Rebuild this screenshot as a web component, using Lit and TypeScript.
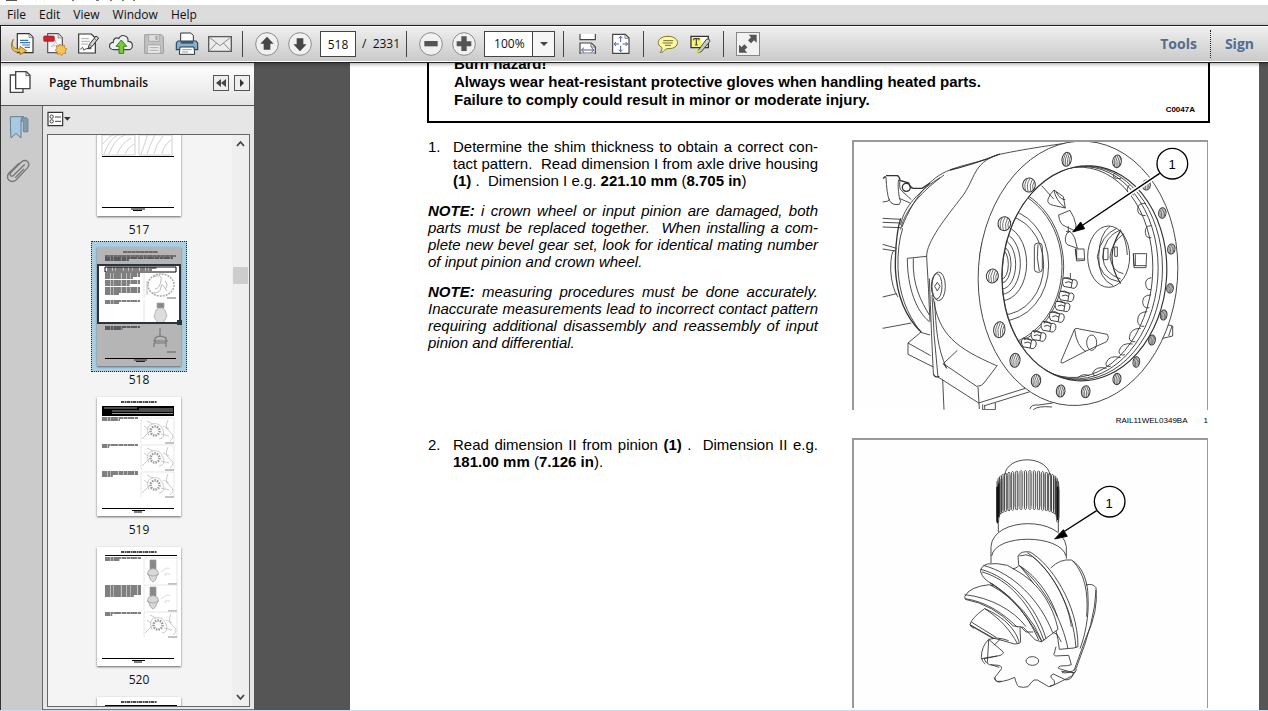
import { LitElement, html, css, svg } from "lit";
import { customElement } from "lit/decorators.js";

/* ---------- toolbar glyphs, drawn on a 72-unit grid shown at 24px ---------- */
const glyph = (body: unknown) => html`<svg class="glyph" viewBox="0 0 72 72" aria-hidden="true">${body}</svg>`;

const disc = svg`<circle cx="36" cy="36" r="34" fill="#f1f1f1" stroke="#8c8c8c" stroke-width="3"/>`;

const icons = {
  open: glyph(svg`
    <path d="M22 5h36l11 11v46H22z" fill="#fff" stroke="#333" stroke-width="3.5"/>
    <path d="M57 5v12h12" fill="#ddd" stroke="#666" stroke-width="2"/>
    <path d="M30 25h25M30 32h30M36 39h24M44 46h16" stroke="#3b74b4" stroke-width="3.5"/>
    <path d="M8 24c-6 14-4 26 12 29h8v-8l20 13-20 12v-8H18C1 60-2 40 8 24z" fill="#f2be4a" stroke="#8f6a1c" stroke-width="2.5" transform="translate(2 -2)"/>`),
  create: glyph(svg`
    <path d="M14 5h32l12 12v45H14z" fill="#f8f8f8" stroke="#555" stroke-width="3.5"/>
    <path d="M45 5v13h13" fill="#ddd" stroke="#777" stroke-width="2"/>
    <path d="M24 44c12-6 14-16 12-20 4 12 8 16 16 16-10 0-20 0-28 4z" fill="none" stroke="#bbb" stroke-width="2.5"/>
    <rect x="2" y="12" width="32" height="16" rx="3" fill="#cf2230" stroke="#991420" stroke-width="2"/>
    <path d="M51 36l5 6 8-3 0 8 8 4-6 5 3 8-8 0-5 7-5-6-8 2 0-8-7-4 6-5-2-8 8 0z" fill="#f5c457" stroke="#b88424" stroke-width="2.5"/>`),
  edit: glyph(svg`
    <path d="M8 6h38l12 12v45H8z" fill="#fff" stroke="#333" stroke-width="3.5"/>
    <path d="M16 20h22M16 28h26M16 36h20" stroke="#aaa" stroke-width="3"/>
    <path d="M14 52c5-8 8-6 8 0s6-2 10-2h14" fill="none" stroke="#333" stroke-width="3"/>
    <path d="M36 50l4-13 20-25 8 6-20 26z" fill="#ccd2d6" stroke="#333" stroke-width="3"/>
    <path d="M40 37l8 7M55 20l8 7" stroke="#444" stroke-width="2"/>`),
  cloud: glyph(svg`
    <path d="M16 53C-4 54-2 31 13 31 12 19 23 15 29 20 36 4 59 10 57 28 75 27 74 53 58 53z" fill="#eef0f2" stroke="#444" stroke-width="3.5"/>
    <path d="M37 24l16 19h-9v21H30V43h-9z" fill="#7dc83c" stroke="#367d16" stroke-width="3"/>`),
  save: glyph(svg`
    <path d="M8 8h50l6 6v50H8z" fill="#c2c2c2" stroke="#9c9c9c" stroke-width="3"/>
    <path d="M20 8h32v20H20z" fill="#dedede" stroke="#a2a2a2" stroke-width="2.5"/>
    <path d="M40 12h7v12h-7z" fill="#aaa"/>
    <path d="M17 39h38v25H17z" fill="#ebebeb" stroke="#a2a2a2" stroke-width="2.5"/>
    <path d="M23 47h26M23 55h26" stroke="#aaa" stroke-width="3"/>`),
  print: glyph(svg`
    <path d="M17 3h30l8 7v26H17z" fill="#fff" stroke="#333" stroke-width="3"/>
    <path d="M9 27h54l5 6v20H4V33z" fill="#87b0cf" stroke="#294760" stroke-width="3.5"/>
    <path d="M17 27h38v8H17z" fill="#365873"/>
    <path d="M15 45h42l2 22H13z" fill="#fff" stroke="#333" stroke-width="3"/>
    <path d="M22 53h28M21 60h18" stroke="#999" stroke-width="3"/>`),
  mail: glyph(svg`
    <path d="M2 14h68v44H2z" fill="#ececec" stroke="#5b5b5b" stroke-width="4"/>
    <path d="M4 16l32 25 32-25M4 56l22-23M68 56L46 33" fill="none" stroke="#777" stroke-width="2.5"/>`),
  up: glyph(svg`${disc}<path d="M36 14l20 21H46v18H26V35H16z" fill="#474747"/>`),
  down: glyph(svg`${disc}<path d="M36 58L16 37h10V19h20v18h10z" fill="#474747"/>`),
  minus: glyph(svg`${disc}<rect x="16" y="27" width="40" height="16" fill="#555"/>`),
  plus: glyph(svg`${disc}<path d="M28 13h16v15h14v15H44v14H28V43H14V28h14z" fill="#555"/>`),
  fitWidth: glyph(svg`
    <path d="M12 6v17h46V6" fill="#fff" stroke="#444" stroke-width="3.5"/>
    <path d="M12 66V33h34l12 11v22" fill="#fff" stroke="#444" stroke-width="3.5"/>
    <path d="M12 63h46M45 33v12h13" fill="none" stroke="#666" stroke-width="3"/>
    <path d="M17 54h36M24 47l-8 7 8 7M46 47l8 7-8 7" fill="none" stroke="#4b5f92" stroke-width="3"/>`),
  fitPage: glyph(svg`
    <path d="M11 7h38l11 11v46H11z" fill="#fff" stroke="#444" stroke-width="3.5"/>
    <path d="M48 7v12h12" fill="none" stroke="#666" stroke-width="2.5"/>
    <path d="M35 13v17M35 41v18M16 36h14M41 36h15M29 19l6-6 6 6M29 53l6 6 6-6M21 30l-6 6 6 6M50 30l6 6-6 6" fill="none" stroke="#4b5f92" stroke-width="3"/>`),
  comment: glyph(svg`
    <path d="M36 13c38 0 38 38 0 37-5 0-9 2-12 6s-7 6-12 5c5-4 7-9 5-15C-2 36 6 13 36 13z" fill="#fbf9a4" stroke="#7c7624" stroke-width="3"/>
    <path d="M22 26h30M20 33h30M27 40h18" stroke="#77722e" stroke-width="3"/>`),
  highlight: glyph(svg`
    <path d="M6 13h52v34H6z" fill="#fdfdf4" stroke="#333" stroke-width="4"/>
    <path d="M9 16h27v28H9z" fill="#fbf36a"/>
    <path d="M14 20h16v5M14 20v5M22 20v19M18 39h8" fill="none" stroke="#444" stroke-width="3.5"/>
    <path d="M28 55l24-33q12-4 10 7L36 60q-16 6-8-5z" fill="#c9cdb8" stroke="#444" stroke-width="3"/>
    <path d="M26 53l10 8-14 2z" fill="#e2dd2e"/>`),
  expand: glyph(svg`
    <rect x="1.500" y="1.500" width="69" height="69" fill="#f2f2f2" stroke="#868686" stroke-width="3"/>
    <path d="M62 8v24l-8-7-9 9-9-9 9-9-7-8zM9 62V38l8 7 8-8 9 9-8 8 8 8z" fill="#555"/>`),
};

/* ---------- figure 1: axle drive housing ---------- */
const boltHoles: Array<[number, number, number, number]> = [
  [537, 150, 19, 21], [463, 266, 19, 21], [427, 423, 18, 21], [448, 584, 17, 24], [495, 676, 15, 21],
  [558, 737, 14, 19], [632, 768, 13, 18], [707, 770, 13, 18], [801, 732, 12, 17], [859, 681, 10, 16],
  [906, 615, 10, 15], [941, 540, 10, 15], [960, 460, 10, 14], [964, 342, 11, 15], [937, 234, 11, 16],
  [889, 150, 12, 15], [801, 79, 13, 19], [650, 73, 14, 21],
];
const bolt = ([x, y, rx, ry]: [number, number, number, number]) => svg`
  <g transform="translate(${x} ${y}) rotate(8)">
    <ellipse rx=${rx} ry=${ry} fill="#fff" stroke-width="3"/>
    <path stroke-width="2" d="M${-rx * 0.4} ${-ry * 0.85}Q${-rx * 0.9} 0 ${-rx * 0.4} ${ry * 0.85}M0 ${-ry * 0.9}Q${-rx * 0.5} 0 0 ${ry * 0.9}M${rx * 0.4} ${-ry * 0.85}Q0 0 ${rx * 0.4} ${ry * 0.85}M${rx * 0.75} ${-ry * 0.6}Q${rx * 0.4} 0 ${rx * 0.75} ${ry * 0.6}"/>
  </g>`;

const chain: Array<[number, number]> = [[658, 443], [648, 483], [636, 513], [619, 545], [594, 574], [564, 602], [535, 624]];
const link = ([x, y]: [number, number]) => svg`
  <g transform="translate(${x} ${y}) rotate(10)">
    <path d="M-18-12Q-26 0-14 14H8V-10zM-18-10Q-8-18 8-10 24-16 24 2 22 18 8 14M-12 2Q-2-6 8 0" fill="#fff"/>
  </g>`;

const lobes = [
  "M905 428q-20 2-18 20t16 16", "M903 480q-26 0-25 22 2 20 20 16", "M892 530q-30 0-29 28 2 18 20 16",
  "M872 580q-32 0-34 28 0 14 18 12", "M848 627q-34-6-41 22 0 14 18 10", "M812 668q-34-10-44 16-2 14 14 10",
  "M770 700q-32-8-42 14 0 10 12 8", "M718 722q-20-8-34 6", "M888 206q-24-4-25 16t24 20", "M904 272q-20 0-18 20t18 16",
  "M838 150q-12 14-2 24l16 6", "M800 112q-14 4-8 16 10 4 22 2",
];

const housing = svg`
  <svg class="drawing" viewBox="854 142 353 268" role="img" aria-label="Axle drive housing">
    <defs>
      <clipPath id="bore"><ellipse cx="703" cy="415" rx="247" ry="323" transform="rotate(4 703 415)"/></clipPath>
    </defs>
    <g transform="translate(850 135) scale(.33333)" fill="none" stroke="#333" stroke-width="2.600" stroke-linejoin="round">
      <path d="M98 201q16 0 22-8M98 250l54 3M98 262l54 2M98 276l54 2M98 328l42 12M98 342l38 6M98 486l42-10M98 580l86-16"/>
      <path d="M108 125q-6 0-8 6M108 122h34q6 2 8 14l26 8q4 14 14 16h26l24-16" stroke-width="4"/>
      <path d="M108 126q2 50 10 70 8 16 30 12 8-8 0-20-6-40-2-54M150 136q-4 26 6 32l28 26M148 190l32 14"/>
      <circle cx="169" cy="157" r="12" stroke-width="4"/>
      <path d="M270 128C190 178 158 230 152 270M282 120C200 180 160 238 152 284"/>
      <path d="M134 346q-12 0-12 60 4 56 22 80"/>
      <path d="M152 250Q136 300 136 400C140 480 164 544 214 592" stroke-width="4"/>
      <path d="M158 280Q142 330 144 400C148 480 170 534 210 588"/>
      <path d="M710 18C650 22 500 46 440 60 400 80 340 88 300 105 240 126 190 190 156 276" />
      <path d="M450 57Q360 92 300 105" stroke-width="4"/>
      <path d="M440 60C370 86 375 130 340 180 290 245 228 320 230 366M664 26C590 50 550 76 500 150 440 232 400 270 388 370"/>
      <path d="M172 370l58-6M172 370C172 460 200 530 238 560M190 370C186 450 214 500 238 540M230 366Q236 460 240 560"/>
      <path d="M238 430Q244 590 250 716M246 480Q250 600 264 726M254 500C258 580 262 640 290 700"/>
      <path d="M250 490C266 600 320 640 440 692"/>
      <path d="M250 716q4 14 18 8" stroke-width="4"/>
      <path d="M212 592l-38 32v34l76 38M174 624l68 38M212 592l28 8M264 726l122 78M290 700l-10-14 42-40M280 686l100 68q16 0 22-10l38-50 2-4M278 734l4 90M384 756l4 66"/>
      <ellipse cx="266" cy="454" rx="20" ry="43"/><ellipse cx="260" cy="454" rx="16" ry="38"/>
      <path d="M262 442l8 12-8 14-8-14z"/>
      <path d="M386 804l140-44M404 812l136-42M398 808v16h38v-20M404 810v12M540 822q2-14 26-12l42-6M550 824q14-12 56-8"/>
      <path d="M936 565l32 8v30l-34 8M966 573l-10 30"/>

      <ellipse cx="684" cy="415" rx="299" ry="397" transform="rotate(4 684 415)" fill="#fff"/>
      <ellipse cx="703" cy="415" rx="247" ry="323" transform="rotate(4 703 415)" stroke-width="3.500"/>
      <g clip-path="url(#bore)">
        <ellipse cx="697" cy="414" rx="240" ry="321" transform="rotate(4 697 414)"/>
        <ellipse cx="688" cy="413" rx="236" ry="319" transform="rotate(4 688 413)"/>
        <ellipse cx="678" cy="412" rx="230" ry="316" transform="rotate(4 678 412)"/>
        <ellipse cx="455" cy="388" rx="20" ry="44"/>
        <ellipse cx="455" cy="388" rx="28" ry="56"/>
        <ellipse cx="455" cy="388" rx="42" ry="74"/>
        <ellipse cx="455" cy="386" rx="56" ry="92"/>
        <ellipse cx="455" cy="385" rx="75" ry="112"/>
        <ellipse cx="455" cy="390" rx="126" ry="150"/>
        <ellipse cx="455" cy="390" rx="141" ry="168"/>
        <ellipse cx="432" cy="395" rx="204" ry="238"/>
        <ellipse cx="432" cy="395" rx="209" ry="244"/>
      </g>
      <rect x="553" y="324" width="24" height="88" rx="11"/>
      <path d="M564 328q-6 40 4 80"/>
      <path d="M575 152l36 40M612 165l28 20 6 34-36-8q-20-4-16-18t18-28M612 165q4 30 34 54M618 170q14 26 28 24"/>
      <path d="M626 240l34-14q14 22 18 44l-2 18-30-14q-18-6-20-34M655 274v20M648 290q12-8 26 18l8 32q-22-8-28-10-12-8-6-28 2-12 14-14"/>
      <path d="M676 342h26l2 34-24 2zM676 342l4 30 24 0M680 344v28"/>
      <ellipse cx="776" cy="365" rx="63" ry="92"/>
      <path d="M800 280q-46 20-58 84 6 66 64 76M780 274q-32 22-34 90t44 88M812 284q-50 20-54 82 4 50 54 66M822 296q-38 26-42 70 6 44 40 50"/>
      <path d="M812 286q-52 82 0 160" stroke-width="3.500"/>
      <path d="M760 340h14v34h-14zM794 336h8v28h-8zM812 286q18 30 20 74"/>
      <path d="M850 356h40l-2 42h-36zM850 356l2 36h37M856 358v34"/>
      <path d="M661 414v16"/>
      ${chain.map(link)}
      <path d="M674 582q8-4 14 0l84 16q8 8-2 22L704 650l-66 34q-8 2-4-8zM674 584q6 50 34 66"/>
      <ellipse cx="725" cy="623" rx="15" ry="23"/>
      ${lobes.map((d) => svg`<path d=${d}/>`)}
      ${boltHoles.map(bolt)}
      <path d="M929 115L700 270" stroke="#fff" stroke-width="14"/>
      <path d="M929 115L690 276" stroke="#000" stroke-width="4"/>
      <path d="M668 291l24-30 12 20z" fill="#000" stroke="#000"/>
      <circle cx="967" cy="86" r="46" fill="#fff" stroke="#000" stroke-width="4"/>
    </g>
    <text class="callout" x="1172" y="169" text-anchor="middle">1</text>
  </svg>`;

/* ---------- figure 2: pinion ---------- */
const splines = Array.from({ length: 22 }, (_, i) => {
  const t = (i - 10.5) / 10.5;
  const x = 263 + 90 * Math.sin((t * Math.PI) / 2);
  const lift = Math.sqrt(Math.max(0, 1 - t * t * 0.98));
  return { x, top: 116 - 56 * lift, bottom: 220 - 44 * lift };
});

const pinion = svg`
  <svg class="drawing" viewBox="854 440 353 268" role="img" aria-label="Pinion">
    <g transform="translate(940 450) scale(.33333)" fill="none" stroke="#333" stroke-width="2.600" stroke-linejoin="round">
      <path d="M194 76C200 14 322 14 330 76" fill="#fff"/>
      ${splines.map(
        (s) => svg`<path d="M${s.x - 3} ${s.bottom}V${s.top + 4}q3-6 6 0V${s.bottom}q-3 6-6 0" stroke-width="2.600"/>
          <path d="M${s.x + 5} ${s.top + 10}V${s.bottom - 8}" stroke="#555" stroke-width="1.500"/>`,
      )}
      <path d="M172 110v110M176 100v100M353 110v100" stroke="#111" stroke-width="4"/>
      <path d="M175 212v34M355 206v40"/>
      <path d="M153 340V290C158 200 366 196 379 290v36M155 318C166 250 362 252 378 318"/>
      <path d="M332 354Q360 326 394 330C430 350 444 400 444 440 448 500 434 560 420 596" fill="#fff"/>
      <path d="M398 332C432 370 446 420 440 500"/>
      <path d="M438 405q20-6 30 8 8 70-30 150L402 662M468 420q-2 90-60 236-20 16-42 12"/>
      <path d="M236 344l-2-26q8-16 36-12C330 340 414 460 414 590l-12 4-44 4q-12-130-122-254z" fill="#fff"/>
      <path d="M262 308C330 350 400 470 408 594M240 348C320 420 366 510 384 596M238 318q20-8 40 2C350 380 386 470 394 530"/>
      <path d="M122 366q-2-16 20-24 30-4 60 4l24 14C300 400 340 470 354 538L306 574Q270 480 158 402 130 390 122 366z" fill="#fff"/>
      <path d="M130 346C220 370 300 450 338 548M122 358C210 380 290 470 318 566M126 366C180 380 260 430 312 572M236 346C280 370 330 430 352 500M218 356q10 0 18-8"/>
      <path d="M156 402C200 430 270 500 296 572M150 406l10 0"/>
      <path d="M74 440q14-30 74-36l8 4C220 440 270 510 306 576l-20-6-36-38-30-4Q160 464 76 448z" fill="#fff"/>
      <path d="M74 434C150 442 220 480 258 530M76 446C140 456 190 490 232 532M150 400C210 430 260 490 296 570"/>
      <path d="M90 524q4-20 44-48C190 500 230 540 238 580l-14 2-64-18z" fill="#fff"/>
      <path d="M134 476C180 506 210 540 232 580M90 526l70 40M94 516l74 46M90 524q8 14 14 8"/>
      <path d="M240 532l2 46M242 530l16 16h22M340 548l10 4q12 20 14 24"/>
      <path d="M190 606l-44-38q-22 22-22 54 2 14 12 20M146 570l-4 68M124 626l48-8M146 568q12-2 24-4 20 2 36 8M182 566l-20 20"/>
      <path d="M190 606q0 10-18 12l-40 8q4 12 16 18l28 2q14 4 6 14l-16 20q-4 10 4 14 18 2 34-4l20-8q6 24 12 28 14 4 28 0 10-14 18-20h10l34 20q10 0 18-8 2-12-10-18-6-8 6-12l38 18q20-2 22-22l-36-10q-18-4-2-10 24 0 32-4l-8-28-40 2q-8-4-2-12l4-16"/>
      <path d="M152 644l26 8M162 682q8 20 24 12M330 708l14-4 40-20M364 664l40 4 6-10M384 684q16-4 22-20"/>
      <ellipse cx="277" cy="633" rx="19" ry="13"/>
      <path d="M470 182L370 246" stroke="#000" stroke-width="4"/>
      <path d="M344 267l26-28 12 20z" fill="#000" stroke="#000"/>
      <circle cx="509" cy="155" r="46" fill="#fff" stroke="#000" stroke-width="4"/>
    </g>
    <text class="callout" x="1109" y="508" text-anchor="middle">1</text>
  </svg>`;

/* ---------- page thumbnails, 84 x 119 ---------- */
const rows = (x: number, y: number, w: number, n: number, last = 0.4) =>
  Array.from({ length: n }, (_, i) => {
    const end = i === n - 1 ? x + w * last : x + w;
    return svg`<path d="M${x} ${y + i * 2}H${end}" stroke="#000" stroke-width="1.200" stroke-dasharray="5 .5 3 .4 7 .6"/>`;
  });
const heading = svg`<path d="M24 5H60" stroke="#111" stroke-width="1.400" stroke-dasharray="3 .6 2 .4"/>`;
const footer = svg`<path d="M5 111.500H77" stroke="#000"/><path d="M35 113.500H48M37 115H45" stroke="#000" stroke-width="1.200"/>`;
const gearPic = (x: number, y: number) => svg`
  <g transform="translate(${x} ${y})" fill="none" stroke="#b5b5b5" stroke-width=".7">
    <path d="M0 25V0h33v25" stroke="#ddd"/>
    <circle cx="14" cy="13" r="4.500" stroke="#999" stroke-width="2.500" stroke-dasharray="1.500 1"/>
    <path d="M8 18q-4-10 3-12 8-2 11 6t-4 9M1 21l8-8M27 2q-4 8 2 12t0 9M22 8l6 3M20 16l8 2M6 3l6 3M3 8l4 3" /><path d="M24 25h9" stroke="#555"/>
  </g>`;
const pinionPic = (x: number, y: number) => svg`
  <g transform="translate(${x} ${y})" fill="none" stroke="#999" stroke-width=".7">
    <path d="M0 25V0h33v25" stroke="#ddd"/>
    <path d="M6 2h6v9H6z" fill="#888"/><path d="M5 12q-3 3 0 6 1 5 4 6 3-1 4-6 3-3 0-6-4-3-8 0zM3 16q6 4 12 0" fill="#d8d8d8"/>
    <path d="M17 14q6-6 9-3M22 18q-4-3 4-2" stroke="#ccc"/>
    <path d="M24 26h9" stroke="#555"/>
  </g>`;
const thumbs: Record<string, unknown> = {
  "517": svg`
    <g fill="none" stroke="#c4c4c4" stroke-width=".8">
      <path d="M5 1h33v20H5zM42 1h33v20H42zM7 20q6-16 14-19M12 20q6-16 16-19M20 20q4-10 14-16M28 20q2-6 9-10M6 10q6-8 10-9M44 20q6-16 6-19M50 20q6-16 8-19M57 20q2-10 9-18M65 20q1-8 9-14"/>
    </g>
    <path d="M5 22.500H77M5 73.500H77" stroke="#000"/><path d="M34 75H48M36 76.500H45" stroke="#000"/>`,
  "518": svg`
    <rect width="84" height="119" fill="#b5b5b5"/>
    <path d="M26 5H61M8 9H79" stroke="#222" stroke-dasharray="4 .3"/>
    ${rows(8, 11, 68, 2, 0.35)}
    <rect x="1" y="18" width="82" height="59" fill="#fff"/>
    <path d="M8 20H79V25H8z" fill="none" stroke="#000"/>
    ${rows(10, 21, 50, 2, 0.9)}
    ${rows(8, 27, 35, 3, 0.8)}${rows(8, 34, 35, 3, 0.7)}${rows(8, 41, 35, 4, 0.4)}${rows(8, 54, 35, 2, 0.4)}
    <g fill="none" stroke="#aaa" stroke-width=".8">
      <ellipse cx="64" cy="38" rx="13" ry="11" stroke-width="1.500" stroke-dasharray="2 1"/>
      <path d="M56 30q10-4 8 4t-6 8M56 46q8 0 8-6t6 4M50 34v14M68 34q4 4 0 8"/>
      <path d="M47 26v25M47 53v24" stroke="#ddd"/>
      <path d="M60 56h7v5h-7z" fill="#888"/><path d="M59 63q6-4 9 0l2 6-4 7h-5l-4-6z" fill="#ddd"/><path d="M70 51h9M70 105h9" stroke="#444"/>
      <path d="M63 81v9M58 91q5-4 11 0v5H58zM56 94h15M57 96v4M69 96v4" stroke="#777" stroke-width="1.200"/>
    </g>
    ${rows(8, 80, 35, 2, 0.5)}
    <path d="M8 111.500H79" stroke="#000"/><path d="M37 113H50M39 114.500H48" stroke="#222"/>
    <rect x="1" y="18" width="82" height="58" fill="none" stroke="#2b333b" stroke-width="2"/>
    <rect x="80" y="73" width="5" height="5" fill="#2b333b"/>`,
  "519": svg`${heading}<path d="M5 9H77V19H5z"/><path d="M7 11H40M42 12H76M15 14H76M15 16.500H76" stroke="#fff" stroke-width=".6"/>
    ${rows(5, 21, 36, 2, 0.5)}${rows(5, 48, 36, 2, 0.2)}${rows(5, 75, 36, 3, 0.3)}
    ${gearPic(44, 21)}${gearPic(44, 48)}${gearPic(44, 75)}${footer}`,
  "520": svg`${heading}<path d="M8 8.500H80" stroke="#000"/>
    ${rows(8, 11, 36, 2, 0.4)}${rows(8, 39, 36, 6, 0.8)}${rows(8, 66, 36, 2, 0.2)}
    ${pinionPic(47, 11)}${pinionPic(47, 38)}${gearPic(47, 65)}${footer}`,
};
const nextPage = svg`${heading}<path d="M8 8.500H80" stroke="#000"/>${rows(8, 11, 36, 3)}${footer}`;

@customElement("app-root")
export class AppRoot extends LitElement {
  static properties = { selected: { state: true } };
  declare selected: string;

  constructor() {
    super();
    this.selected = "518";
  }

  static styles = css`
    :host {
      display: flex;
      flex-direction: column;
      height: 100vh;
      overflow: hidden;
      background: #555;
      color: #111;
      font: 12px/16px "Open Sans", "Noto Sans", sans-serif;
    }
    * { box-sizing: border-box; }
    button {
      margin: 0;
      padding: 0;
      border: 0;
      background: none;
      color: inherit;
      font: inherit;
    }
    .titlebar { flex: none; height: 5px; background: #fff; }
    .titlebar svg { display: block; }
    .menubar { flex: none; display: flex; gap: 13px; height: 20px; padding: 0 7px; background: #dcdcdc; }
    .toolbar {
      flex: none;
      z-index: 1;
      display: flex;
      align-items: center;
      height: 38px;
      padding: 0 14px 0 4px;
      border: solid #222;
      border-width: 1px 0 1px 1px;
      background: linear-gradient(#f0f0f0, #c9c9c9);
      box-shadow: inset 0 1px #fff, inset 0 -1px #fff, 0 1px 4px rgb(0 0 0 / 40%);
    }
    .tool { display: grid; place-items: center; width: 33px; height: 33px; flex: none; }
    .glyph { display: block; width: 24px; height: 24px; }
    .rule { flex: none; width: 1px; height: 26px; margin: 0 7px 0 6px; background: #444; }
    .pageno {
      width: 36px;
      height: 26px;
      margin: 0 6px 0 4px;
      padding: 0;
      border: 1px solid #444;
      background: #fff;
      color: #111;
      font: inherit;
      text-align: center;
    }
    .total { white-space: pre; }
    .zoom { display: grid; grid-template-columns: 47px 22px; height: 26px; margin: 0 2px 0 4px; border: 1px solid #444; background: #fff; }
    .zoom select {
      grid-area: 1 / 1 / 2 / 3;
      appearance: none;
      border: 0;
      padding: 0 0 0 9px;
      background: none;
      color: #111;
      font: inherit;
    }
    .zoom span { grid-area: 1 / 2; display: grid; place-items: center; border-left: 1px solid #444; background: #f6f6f6; pointer-events: none; }
    .zoom svg { width: 8px; height: 4px; }
    .spacer { flex: 1; }
    .link { color: #536d8f; font-size: 14px; font-weight: 700; text-decoration: none; }
    .dotted { height: 28px; margin: 0 14px 0 13px; border-left: 1px dotted #222; }

    .workspace { flex: 1; display: flex; min-height: 0; border-bottom: 1px solid #c9dbe6; }
    .side {
      flex: none;
      display: grid;
      grid-template: 43px minmax(0, 1fr) / 42px 212px;
      border-left: 1px solid #333;
      width: 254px;
      background: #e6e6e6;
    }
    .side-head {
      grid-column: 1 / 3;
      display: flex;
      align-items: center;
      padding: 0 5px 2px 7px;
      border-bottom: 1px solid #555;
      background: linear-gradient(#fff, #e4e4e4);
    }
    .side-head h2 { flex: 1; margin: 0 0 0 17px; font-size: 12px; line-height: 16px; font-weight: 600; }
    .pages { width: 24px; height: 26px; }
    .mini { width: 16px; height: 16px; margin-left: 5px; border: 1px solid #555; background: #eee; display: grid; place-items: center; }
    .mini svg { width: 10px; height: 8px; }
    .rail { display: flex; flex-direction: column; align-items: center; gap: 18px; padding: 8px 8px 0 0; border-right: 1px solid #666; background: #cbcbcb; }
    .rail svg { display: block; width: 26px; height: 26px; }
    .thumbs-pane { display: flex; flex-direction: column; min-height: 0; padding: 5px 4px 2px 4px; border-right: 1px solid #888; border-bottom: 1px solid #777; }
    .options { display: block; width: 26px; height: 16px; margin-bottom: 7px; }
    .options svg { display: block; width: 26px; height: 16px; }
    .frame { flex: 1; display: flex; min-height: 0; border: 1px solid #666; background: #f4f4f4; }
    .scroller { flex: 1; overflow: hidden; }
    .list { margin: -44px 0 0; padding: 0 2px 0 0; list-style: none; }
    .list li { display: flex; justify-content: center; }
    .thumb { display: grid; justify-items: center; height: 150px; grid-template-rows: 131px 19px; line-height: 16px; }
    .thumb .card { padding: 5px; border: 1px dotted transparent; }
    .thumb.on .card { border-color: #223; background: #abcfe2; }
    .card svg { display: block; width: 84px; height: 119px; background: #fff; box-shadow: 0 1px 2px #666; overflow: visible; }
    .bar { display: flex; flex-direction: column; width: 17px; background: #efefef; align-items: center; }
    .bar button { width: 16px; height: 18px; display: grid; place-items: center; }
    .bar svg { width: 9px; height: 8px; }
    .before { flex: 114; }
    .grip { flex: none; width: 15px; height: 17px; background: #cdcdcd; }
    .after { flex: 405; }

    .doc { flex: 1; min-width: 0; display: flex; padding-right: 9px; background: #555; }
    .splitter { flex: none; width: 96px; display: flex; align-items: center; padding: 0 0 0 2px; }
    .splitter span { width: 5px; height: 48px; background: radial-gradient(circle, #bbb 35%, transparent 45%) 0 0 / 2px 2px; }
    .paper {
      flex: 1;
      min-width: 0;
      overflow: hidden;
      padding: 0 51px 0 78px;
      background: #fff;
      color: #000;
      font: 15px/17px "Liberation Sans", Arial, sans-serif;
    }
    .warning { display: flex; justify-content: space-between; margin: -20px -2px 0 -1px; padding: 10px 13px 7px 25px; border: 2px solid #000; font-weight: 700; line-height: 18px; }
    .warning p { margin: 0 0 5px; }
    .warning small { align-self: flex-end; font-size: 8px; line-height: 8px; }
    .step { display: grid; grid-template-columns: 390fr 356fr; gap: 34px; padding-top: 15px; }
    .step + .step { padding-top: 8px; }
    .step p { margin: 0 0 13px; }
    .item { display: grid; grid-template-columns: 25px 1fr; }
    .just { display: block; text-align-last: justify; }
    .line { display: block; }
    .note { font-style: italic; }
    figure { margin: 2px 0 0; }
    .drawing { display: block; width: 100%; border: solid #999; border-width: 2px 1px 0 2px; background: #fefefe; }
    .callout { font: 13px "Liberation Sans", Arial, sans-serif; fill: #000; }
    figcaption { display: flex; justify-content: flex-end; gap: 16px; padding-top: 3px; font-size: 8px; line-height: 15px; }
  `;

  private tool(name: keyof typeof icons, label: string) {
    return html`<button class="tool" aria-label=${label} title=${label}>${icons[name]}</button>`;
  }

  private sidebar() {
    return html`<aside class="side">
      <header class="side-head">
        <svg class="pages" viewBox="0 0 72 78" aria-hidden="true">
          <path d="M7 15h38v52H7z" fill="#fff" stroke="#444" stroke-width="4"/>
          <path d="M23 5h32l11 11v40H23z" fill="#fff" stroke="#444" stroke-width="4"/>
          <path d="M54 5v12h12" fill="none" stroke="#555" stroke-width="3"/>
        </svg>
        <h2>Page Thumbnails</h2>
        <button class="mini" aria-label="Collapse"><svg viewBox="0 0 10 8"><path d="M5 0v8L0 4zM10 0v8L5 4z" fill="#444"/></svg></button>
        <button class="mini" aria-label="Expand"><svg viewBox="0 0 10 8"><path d="M3 0v8l4-4z" fill="#333"/></svg></button>
      </header>
      <nav class="rail">
        <button aria-label="Bookmarks"><svg viewBox="0 0 78 78">
          <path d="M36 11h28q7 2 5 12v30q-10 2-14 0V22H40z" fill="#7f9db2" stroke="#5d7789" stroke-width="2"/>
          <path d="M16 8h40q-8 2-8 12v52L33 58 18 72q-2-30-2-64z" fill="#a9c9df" stroke="#5f7f96" stroke-width="3"/>
        </svg></button>
        <button aria-label="Attachments"><svg viewBox="0 0 78 78">
          <path d="M58 20L26 52q-6 4-9 1-4-4 1-10L50 11q10-7 18 0 7 8 0 18L34 65q-12 10-22 2-9-10 0-22L42 16M56 34L32 58" fill="none" stroke="#777" stroke-width="4" stroke-linecap="round"/>
        </svg></button>
      </nav>
      <section class="thumbs-pane">
        <button class="options" aria-label="Options"><svg viewBox="0 0 78 48">
          <path d="M3 4h44v40H3z" fill="#fff" stroke="#333" stroke-width="3.500"/><circle cx="14" cy="17" r="5" fill="none" stroke="#444" stroke-width="3"/>
          <circle cx="14" cy="31" r="5" fill="none" stroke="#444" stroke-width="3"/><path d="M24 18h18M24 31h18" stroke="#444" stroke-width="3"/>
          <path d="M51 18h20L61 29z" fill="#333"/>
        </svg></button>
        <div class="frame">
          <div class="scroller">
            <ul class="list">
              ${Object.keys(thumbs).map(
                (n) => html`<li>
                  <button class="thumb ${this.selected === n ? "on" : ""}" @click=${() => (this.selected = n)}>
                    <span class="card"><svg viewBox="0 ${n === "517" ? -37 : 0} 84 119" aria-hidden="true">${thumbs[n]}</svg></span>
                    <span>${n}</span>
                  </button>
                </li>`,
              )}
              <li><button class="thumb" aria-label="Next page"><span class="card"><svg viewBox="0 0 84 119" aria-hidden="true">${nextPage}</svg></span></button></li>
            </ul>
          </div>
          <div class="bar">
            <button aria-label="Scroll up"><svg viewBox="0 0 9 8"><path d="M1 6l3.500-4L8 6" fill="none" stroke="#444" stroke-width="1.800"/></svg></button>
            <span class="before"></span><span class="grip"></span><span class="after"></span>
            <button aria-label="Scroll down"><svg viewBox="0 0 9 8"><path d="M1 2l3.500 4L8 2" fill="none" stroke="#444" stroke-width="1.800"/></svg></button>
          </div>
        </div>
      </section>
    </aside>`;
  }

  render() {
    return html`
      <div class="titlebar">
        <svg width="160" height="5" aria-hidden="true"><path d="M6 0.500h11" stroke="#555"/><path d="M72 .5h2M96 .5h3M110 .5h2M122 .5h2M133 .5h2" stroke="#777"/></svg>
      </div>
      <nav class="menubar">
        ${["File", "Edit", "View", "Window", "Help"].map((m) => html`<button>${m}</button>`)}
      </nav>
      <div class="toolbar">
        ${this.tool("open", "Open")}${this.tool("create", "Create PDF")}${this.tool("edit", "Edit")}
        ${this.tool("cloud", "Upload")}${this.tool("save", "Save")}${this.tool("print", "Print")}${this.tool("mail", "Email")}
        <span class="rule"></span>
        ${this.tool("up", "Previous page")}${this.tool("down", "Next page")}
        <input class="pageno" aria-label="Page number" .value=${"518"} />
        <span class="total">/  2331</span>
        <span class="rule"></span>
        ${this.tool("minus", "Zoom out")}${this.tool("plus", "Zoom in")}
        <div class="zoom">
          <select aria-label="Zoom level"><option>100%</option><option>125%</option></select>
          <span><svg viewBox="0 0 8 4"><path d="M0 0h8L4 4z" fill="#444"/></svg></span>
        </div>
        <span class="rule"></span>
        ${this.tool("fitWidth", "Fit width")}${this.tool("fitPage", "Fit page")}
        <span class="rule"></span>
        ${this.tool("comment", "Comment")}${this.tool("highlight", "Highlight")}
        <span class="rule"></span>
        ${this.tool("expand", "Full screen")}
        <span class="spacer"></span>
        <a class="link" href="#tools">Tools</a>
        <span class="dotted"></span>
        <a class="link" href="#sign">Sign</a>
      </div>
      <div class="workspace">
        ${this.sidebar()}
        <main class="doc">
          <div class="splitter"><span></span></div>
          <article class="paper">
            <section class="warning">
              <p>
                <span class="line">Burn hazard!</span>
                <span class="line">Always wear heat-resistant protective gloves when handling heated parts.</span>
                <span class="line">Failure to comply could result in minor or moderate injury.</span>
              </p>
              <small>C0047A</small>
            </section>
            <section class="step">
              <div>
                <p class="item">
                  <span>1.</span>
                  <span>
                    <span class="just">Determine the shim thickness to obtain a correct con-</span>
                    <span class="just">tact pattern.&nbsp; Read dimension I from axle drive housing</span>
                    <span class="line"><b>(1)</b> .&nbsp; Dimension I e.g. <b>221.10 mm</b> (<b>8.705 in</b>)</span>
                  </span>
                </p>
                <p class="note">
                  <span class="just"><b>NOTE:</b> i crown wheel or input pinion are damaged, both</span>
                  <span class="just">parts must be replaced together.&nbsp; When installing a com-</span>
                  <span class="just">plete new bevel gear set, look for identical mating number</span>
                  <span class="line">of input pinion and crown wheel.</span>
                </p>
                <p class="note">
                  <span class="just"><b>NOTE:</b> measuring procedures must be done accurately.</span>
                  <span class="just">Inaccurate measurements lead to incorrect contact pattern</span>
                  <span class="just">requiring additional disassembly and reassembly of input</span>
                  <span class="line">pinion and differential.</span>
                </p>
              </div>
              <figure>${housing}<figcaption><span>RAIL11WEL0349BA</span><span>1</span></figcaption></figure>
            </section>
            <section class="step">
              <div>
                <p class="item">
                  <span>2.</span>
                  <span>
                    <span class="just">Read dimension II from pinion <b>(1)</b> .&nbsp; Dimension II e.g.</span>
                    <span class="line"><b>181.00 mm</b> (<b>7.126 in</b>).</span>
                  </span>
                </p>
              </div>
              <figure>${pinion}</figure>
            </section>
          </article>
        </main>
      </div>
    `;
  }
}
